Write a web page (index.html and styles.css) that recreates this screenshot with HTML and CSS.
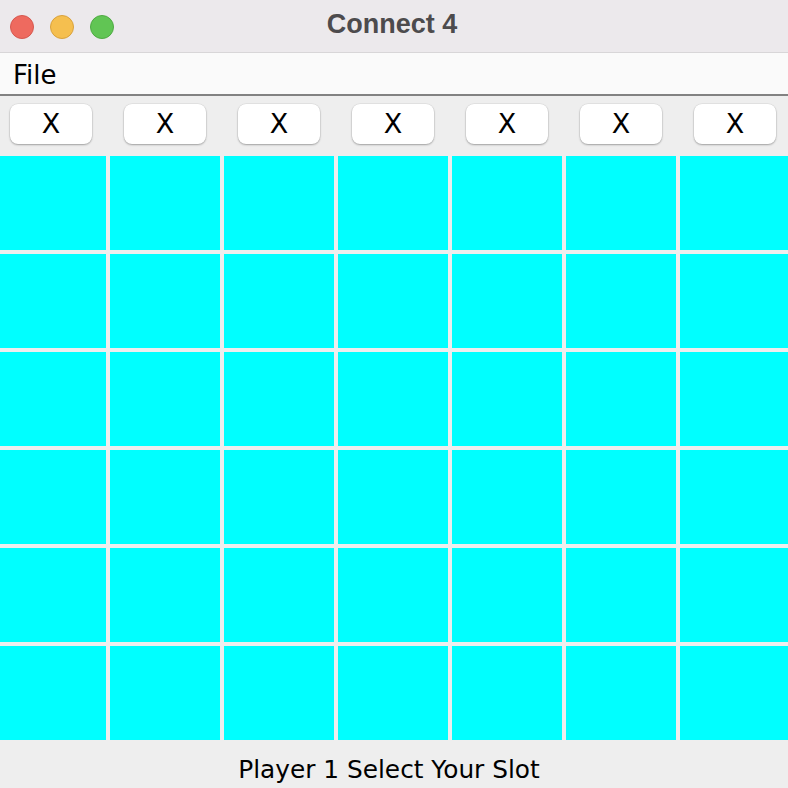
FILE: index.html
```html
<!DOCTYPE html>
<html>
<head>
<meta charset="utf-8">
<link rel="stylesheet" href="styles.css">
</head>
<body>
<div class="window">
  <div class="titlebar">
    <div class="lights">
      <span class="light red"></span>
      <span class="light yellow"></span>
      <span class="light green"></span>
    </div>
    <div class="title">Connect 4</div>
  </div>
  <div class="menubar"><span class="menu">File</span></div>
  <div class="toolbar">
    <div class="cols">
      <div class="col"><button class="btn">X</button></div>
      <div class="col"><button class="btn">X</button></div>
      <div class="col"><button class="btn">X</button></div>
      <div class="col"><button class="btn">X</button></div>
      <div class="col"><button class="btn">X</button></div>
      <div class="col"><button class="btn">X</button></div>
      <div class="col"><button class="btn">X</button></div>
    </div>
  </div>
  <div class="board">
    <div class="cells">
      <div class="cell"></div><div class="cell"></div><div class="cell"></div><div class="cell"></div><div class="cell"></div><div class="cell"></div><div class="cell"></div>
      <div class="cell"></div><div class="cell"></div><div class="cell"></div><div class="cell"></div><div class="cell"></div><div class="cell"></div><div class="cell"></div>
      <div class="cell"></div><div class="cell"></div><div class="cell"></div><div class="cell"></div><div class="cell"></div><div class="cell"></div><div class="cell"></div>
      <div class="cell"></div><div class="cell"></div><div class="cell"></div><div class="cell"></div><div class="cell"></div><div class="cell"></div><div class="cell"></div>
      <div class="cell"></div><div class="cell"></div><div class="cell"></div><div class="cell"></div><div class="cell"></div><div class="cell"></div><div class="cell"></div>
      <div class="cell"></div><div class="cell"></div><div class="cell"></div><div class="cell"></div><div class="cell"></div><div class="cell"></div><div class="cell"></div>
    </div>
  </div>
  <div class="status">Player 1 Select Your Slot</div>
</div>
</body>
</html>
```
FILE: styles.css
```css
html, body {
  margin: 0;
  padding: 0;
  background: #eeeeee;
}
.window {
  width: 788px;
  height: 788px;
  overflow: hidden;
  display: flex;
  flex-direction: column;
  font-family: "DejaVu Sans", sans-serif;
}
.titlebar {
  height: 52px;
  border-bottom: 1px solid #d8d6d8;
  background: #ece9ec;
  display: flex;
  align-items: center;
  position: relative;
  flex-shrink: 0;
}
.lights {
  display: flex;
  gap: 16px;
  padding-left: 10px;
  padding-top: 1px;
}
.light {
  width: 22px;
  height: 22px;
  border-radius: 50%;
  border: 1px solid transparent;
}
.red { background: #ee6a5f; border-color: #d6584f; }
.yellow { background: #f5bf4f; border-color: #d9a23d; }
.green { background: #61c554; border-color: #4faa43; }
.title {
  position: absolute;
  left: 0;
  right: 0;
  top: 0;
  bottom: 0;
  display: flex;
  align-items: center;
  justify-content: center;
  font-family: "Liberation Sans", Arial, sans-serif;
  font-weight: bold;
  font-size: 27px;
  color: #4d4b4d;
  padding-right: 4px;
  padding-bottom: 4px;
}
.menubar {
  height: 41px;
  background: #fafafa;
  border-bottom: 2px solid #828282;
  display: flex;
  align-items: center;
  flex-shrink: 0;
}
.menu {
  font-size: 26px;
  color: #000;
  padding-left: 13px;
  padding-top: 2px;
}
.toolbar {
  height: 60px;
  flex-shrink: 0;
  overflow: hidden;
}
.cols {
  display: grid;
  grid-template-columns: repeat(7, 110px);
  column-gap: 4px;
  margin-left: -4px;
  padding-top: 8px;
}
.col {
  display: flex;
  justify-content: center;
}
.btn {
  width: 82px;
  height: 40px;
  border: none;
  border-radius: 8px;
  background: #ffffff;
  box-shadow: 0 1px 2px rgba(0,0,0,0.3), 0 0 0 0.5px rgba(0,0,0,0.08);
  font-family: "DejaVu Sans", sans-serif;
  font-size: 27px;
  color: #000;
  padding: 0;
  line-height: 40px;
}
.board {
  height: 584px;
  flex-shrink: 0;
  overflow: hidden;
}
.cells {
  display: grid;
  grid-template-columns: repeat(7, 110px);
  grid-template-rows: repeat(6, 94px);
  gap: 4px;
  margin-left: -4px;
}
.cell {
  background: #00ffff;
}
.status {
  flex: 1;
  text-align: center;
  font-size: 24.8px;
  color: #000;
  padding-top: 15px;
  padding-right: 10px;
  line-height: 30px;
}
```
